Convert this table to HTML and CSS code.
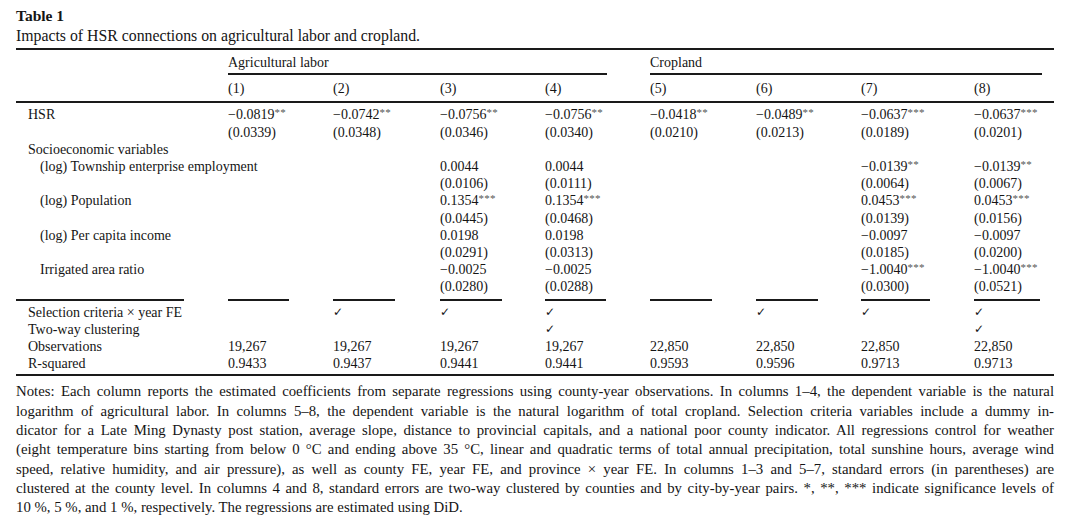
FILE: index.html
```html
<!DOCTYPE html>
<html lang="en">
<head>
<meta charset="utf-8">
<title>Table 1</title>
<link rel="stylesheet" href="styles.css">
</head>
<body>
<div class="page">
  <div class="title">Table 1</div>
  <div class="caption">Impacts of HSR connections on agricultural labor and cropland.</div>
  <div class="rule-full top"></div>

  <div class="row group">
    <div></div>
    <div class="span4">Agricultural labor</div>
    <div class="span4">Cropland</div>
  </div>
  <div class="row underline">
    <div></div>
    <div class="span4"><div class="line w-ag"></div></div>
    <div class="span4"><div class="line w-crop"></div></div>
  </div>
  <div class="row heads">
    <div></div><div>(1)</div><div>(2)</div><div>(3)</div><div>(4)</div><div>(5)</div><div>(6)</div><div>(7)</div><div>(8)</div>
  </div>
  <div class="rule-full mid"></div>

  <div class="body">
    <div class="row">
      <div class="lab">HSR</div>
      <div>−0.0819<sup>**</sup></div><div>−0.0742<sup>**</sup></div><div>−0.0756<sup>**</sup></div><div>−0.0756<sup>**</sup></div>
      <div>−0.0418<sup>**</sup></div><div>−0.0489<sup>**</sup></div><div>−0.0637<sup>***</sup></div><div>−0.0637<sup>***</sup></div>
    </div>
    <div class="row">
      <div></div>
      <div>(0.0339)</div><div>(0.0348)</div><div>(0.0346)</div><div>(0.0340)</div>
      <div>(0.0210)</div><div>(0.0213)</div><div>(0.0189)</div><div>(0.0201)</div>
    </div>
    <div class="row">
      <div class="lab wide">Socioeconomic variables</div>
    </div>
    <div class="row">
      <div class="lab sub">(log) Township enterprise employment</div>
      <div></div><div></div><div>0.0044</div><div>0.0044</div><div></div><div></div><div>−0.0139<sup>**</sup></div><div>−0.0139<sup>**</sup></div>
    </div>
    <div class="row">
      <div></div>
      <div></div><div></div><div>(0.0106)</div><div>(0.0111)</div><div></div><div></div><div>(0.0064)</div><div>(0.0067)</div>
    </div>
    <div class="row">
      <div class="lab sub">(log) Population</div>
      <div></div><div></div><div>0.1354<sup>***</sup></div><div>0.1354<sup>***</sup></div><div></div><div></div><div>0.0453<sup>***</sup></div><div>0.0453<sup>***</sup></div>
    </div>
    <div class="row">
      <div></div>
      <div></div><div></div><div>(0.0445)</div><div>(0.0468)</div><div></div><div></div><div>(0.0139)</div><div>(0.0156)</div>
    </div>
    <div class="row">
      <div class="lab sub">(log) Per capita income</div>
      <div></div><div></div><div>0.0198</div><div>0.0198</div><div></div><div></div><div>−0.0097</div><div>−0.0097</div>
    </div>
    <div class="row">
      <div></div>
      <div></div><div></div><div>(0.0291)</div><div>(0.0313)</div><div></div><div></div><div>(0.0185)</div><div>(0.0200)</div>
    </div>
    <div class="row">
      <div class="lab sub">Irrigated area ratio</div>
      <div></div><div></div><div>−0.0025</div><div>−0.0025</div><div></div><div></div><div>−1.0040<sup>***</sup></div><div>−1.0040<sup>***</sup></div>
    </div>
    <div class="row">
      <div></div>
      <div></div><div></div><div>(0.0280)</div><div>(0.0288)</div><div></div><div></div><div>(0.0300)</div><div>(0.0521)</div>
    </div>
  </div>

  <div class="row shortrules">
    <div><div class="line w-lab"></div></div>
    <div><div class="line w1"></div></div>
    <div><div class="line w2"></div></div>
    <div><div class="line w3"></div></div>
    <div><div class="line w4"></div></div>
    <div><div class="line w5"></div></div>
    <div><div class="line w6"></div></div>
    <div><div class="line w7"></div></div>
    <div><div class="line w8"></div></div>
  </div>

  <div class="foot">
    <div class="row">
      <div class="lab">Selection criteria × year FE</div>
      <div></div><div class="chk">✓</div><div class="chk">✓</div><div class="chk">✓</div><div></div><div class="chk">✓</div><div class="chk">✓</div><div class="chk">✓</div>
    </div>
    <div class="row">
      <div class="lab">Two-way clustering</div>
      <div></div><div></div><div></div><div class="chk">✓</div><div></div><div></div><div></div><div class="chk">✓</div>
    </div>
    <div class="row">
      <div class="lab">Observations</div>
      <div>19,267</div><div>19,267</div><div>19,267</div><div>19,267</div><div>22,850</div><div>22,850</div><div>22,850</div><div>22,850</div>
    </div>
    <div class="row">
      <div class="lab">R-squared</div>
      <div>0.9433</div><div>0.9437</div><div>0.9441</div><div>0.9441</div><div>0.9593</div><div>0.9596</div><div>0.9713</div><div>0.9713</div>
    </div>
  </div>
  <div class="rule-full bottom"></div>

  <div class="notes">
    <span class="nl">Notes: Each column reports the estimated coefficients from separate regressions using county-year observations. In columns 1–4, the dependent variable is the natural</span>
    <span class="nl">logarithm of agricultural labor. In columns 5–8, the dependent variable is the natural logarithm of total cropland. Selection criteria variables include a dummy in-</span>
    <span class="nl">dicator for a Late Ming Dynasty post station, average slope, distance to provincial capitals, and a national poor county indicator. All regressions control for weather</span>
    <span class="nl">(eight temperature bins starting from below 0 °C and ending above 35 °C, linear and quadratic terms of total annual precipitation, total sunshine hours, average wind</span>
    <span class="nl">speed, relative humidity, and air pressure), as well as county FE, year FE, and province × year FE. In columns 1–3 and 5–7, standard errors (in parentheses) are</span>
    <span class="nl">clustered at the county level. In columns 4 and 8, standard errors are two-way clustered by counties and by city-by-year pairs. *, **, *** indicate significance levels of</span>
    <span class="nl last">10 %, 5 %, and 1 %, respectively. The regressions are estimated using DiD.</span>
  </div>
</div>
</body>
</html>
```

FILE: styles.css
```css
html, body {
  margin: 0;
  padding: 0;
  background: #ffffff;
}

.page {
  width: 1038px;
  margin-left: 16px;
  color: #151515;
  font-family: "Liberation Serif", "Times New Roman", serif;
}

.title {
  font-weight: bold;
  font-size: 15.5px;
  line-height: 18px;
  padding-top: 7px;
}

.caption {
  font-size: 15.8px;
  line-height: 20px;
  margin-top: 1px;
}

.rule-full {
  height: 2px;
  background: #1a1a1a;
}

.rule-full.top {
  margin-top: 2px;
}

.row {
  display: grid;
  grid-template-columns: 212px 105px 107px 105px 105px 106px 105px 113px 80px;
  font-size: 14px;
  line-height: 17.2px;
  white-space: nowrap;
}

.row .span4 {
  grid-column: span 4;
}

.group {
  padding-top: 4px;
}

.underline {
  height: 2px;
  margin-top: 2px;
}

.line {
  height: 2px;
  background: #1a1a1a;
}

.w-ag { width: 379px; }
.w-crop { width: 392px; }

.heads {
  padding-top: 5px;
}

.rule-full.mid {
  margin-top: 4px;
}

.body {
  padding-top: 3px;
}

.lab {
  padding-left: 12px;
}

.lab.sub {
  padding-left: 24px;
}

.lab.wide {
  grid-column: span 4;
}

sup {
  font-size: 11px;
  line-height: 0;
  vertical-align: 3px;
  color: #555;
  letter-spacing: 0.3px;
}

.shortrules {
  height: 2px;
  margin-top: 3px;
}

.w-lab { width: 168px; }
.w1 { width: 61px; }
.w2 { width: 62px; }
.w3 { width: 62px; }
.w4 { width: 61px; }
.w5 { width: 62px; }
.w6 { width: 62px; }
.w7 { width: 69px; }
.w8 { width: 66px; }

.foot {
  padding-top: 3px;
}

.chk {
  font-family: "DejaVu Sans", sans-serif;
  font-size: 12px;
  font-weight: bold;
}

.rule-full.bottom {
  margin-top: 2px;
}

.notes {
  padding-top: 6px;
  font-size: 14.8px;
  line-height: 19.3px;
}

.nl {
  display: block;
  text-align: justify;
  text-align-last: justify;
  white-space: nowrap;
}

.nl.last {
  text-align-last: left;
}
```
